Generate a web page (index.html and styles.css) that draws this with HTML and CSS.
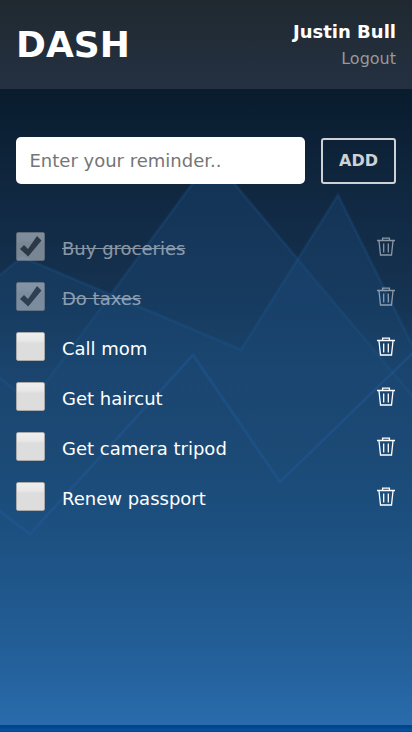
FILE: index.html
```html
<!DOCTYPE html>
<html lang="en">
<head>
<meta charset="utf-8">
<meta name="viewport" content="width=device-width, initial-scale=1">
<title>Dash</title>
<link rel="stylesheet" href="styles.css">
</head>
<body>
<svg width="0" height="0" class="defs" aria-hidden="true">
  <symbol id="trash" viewBox="0 0 18 19"><path d="M0 3.500H18M5.600 3V1.100h6.800V3M2 4l1.500 14h11L16 4" fill="none" stroke="currentColor" stroke-width="1.300"/><path d="M6.700 6.500v9M11.300 6.500v9" stroke="currentColor" stroke-width="1.300"/></symbol>
  <symbol id="check" viewBox="0 0 29 29"><path d="M4 17l4-4 4 4L21 4l4.500 4.500L12.200 24.500z" fill="#444"/></symbol>
</svg>
<div class="app">
  <svg class="mountains" viewBox="0 0 412 732" aria-hidden="true">
    <defs><linearGradient id="haze" gradientUnits="userSpaceOnUse" x1="0" y1="150" x2="0" y2="480"><stop offset="0" stop-color="#1b4d80" stop-opacity=".36"/><stop offset=".45" stop-color="#1b4d80" stop-opacity=".3"/><stop offset="1" stop-color="#1c5080" stop-opacity="0"/></linearGradient></defs>
    <g fill="url(#haze)" stroke="#225f9d" stroke-opacity=".22" stroke-width="3">
      <path d="M-10 370L31 403L212 157L420 405V740H-10z"/>
      <path d="M-10 283L22 257L241 350L338 195L420 361V740H-10z"/>
    </g>
    <path d="M-10 504L30 534L193 355L280 482L420 346" fill="none" stroke="#225f9d" stroke-opacity=".34" stroke-width="3"/>
  </svg>
  <header class="header">
    <h1 class="brand">DASH</h1>
    <div class="account"><strong class="name">Justin Bull</strong><a class="logout">Logout</a></div>
  </header>
  <main class="main">
    <form class="entry"><input class="field" type="text" placeholder="Enter your reminder.."><button class="add" type="button">ADD</button></form>
    <ul class="list">
      <li class="item done"><span class="box"><svg><use href="#check"/></svg></span><span class="label">Buy groceries</span><svg class="trash"><use href="#trash"/></svg></li>
      <li class="item done"><span class="box"><svg><use href="#check"/></svg></span><span class="label">Do taxes</span><svg class="trash"><use href="#trash"/></svg></li>
      <li class="item"><span class="box"></span><span class="label">Call mom</span><svg class="trash"><use href="#trash"/></svg></li>
      <li class="item"><span class="box"></span><span class="label">Get haircut</span><svg class="trash"><use href="#trash"/></svg></li>
      <li class="item"><span class="box"></span><span class="label">Get camera tripod</span><svg class="trash"><use href="#trash"/></svg></li>
      <li class="item"><span class="box"></span><span class="label">Renew passport</span><svg class="trash"><use href="#trash"/></svg></li>
    </ul>
  </main>
  <div class="base"></div>
</div>
</body>
</html>
```
FILE: styles.css
```css
* { box-sizing: border-box; }
body { margin: 0; font-family: "DejaVu Sans", sans-serif; color: #fff; overflow: hidden; }
.defs { position: absolute; }
.app { position: relative; height: 732px; display: flex; flex-direction: column; background: linear-gradient(#061523 0, #0a1d2f 100px, #122b46 225px, #153352 300px, #1a4269 370px, #1c5080 530px, #225d95 640px, #296bac 725px); }
.mountains { position: absolute; left: 0; top: 0; width: 100%; height: 100%; }
.header { position: relative; display: flex; justify-content: space-between; align-items: center; height: 89px; padding: 0 16px; background: linear-gradient(#202930, #243142); }
.brand { margin: 0; font-size: 36px; line-height: 42px; }
.account { display: flex; flex-direction: column; align-items: flex-end; }
.name { font-size: 18px; line-height: 27px; }
.logout { font-size: 16px; line-height: 27px; color: #999; }
.main { position: relative; flex: 1; padding: 48px 16px 0; }
.entry { display: flex; gap: 16px; align-items: flex-end; }
.field { flex: 1; min-width: 0; height: 47px; padding: 0 13.5px; border: 0; border-radius: 5px; background: #fff; font: 18px "DejaVu Sans", sans-serif; }
.field::placeholder { color: #757575; }
.add { width: 75px; height: 46px; padding: 0 0 2px; border: 2px solid #ced2d6; border-radius: 3px; background: transparent; color: #ced2d6; font: bold 16px "DejaVu Sans", sans-serif; }
.list { list-style: none; margin: 48px 0 0; padding: 0; }
.item { display: flex; height: 50px; align-items: flex-start; }
.box { width: 29px; height: 29px; border: 1px solid #aaa; border-radius: 2px; background: linear-gradient(#eee, #e8e8e8 28%, #ddd 38%, #ddd); }
.box svg { display: block; width: 29px; height: 29px; margin: -1px; }
.label { flex: 1; margin-left: 17px; font-size: 18px; line-height: 33px; }
.trash { width: 18px; height: 19px; margin: 5px 1px 0 0; }
.done .box, .done .label, .done .trash { opacity: .5; }
.done .label { text-decoration: line-through; flex: 0 1 auto; }
.done .trash { margin-left: auto; }
.base { position: relative; height: 7px; background: linear-gradient(#00468b 0 30%, #0a50a0 75%, #00468b); }
```
